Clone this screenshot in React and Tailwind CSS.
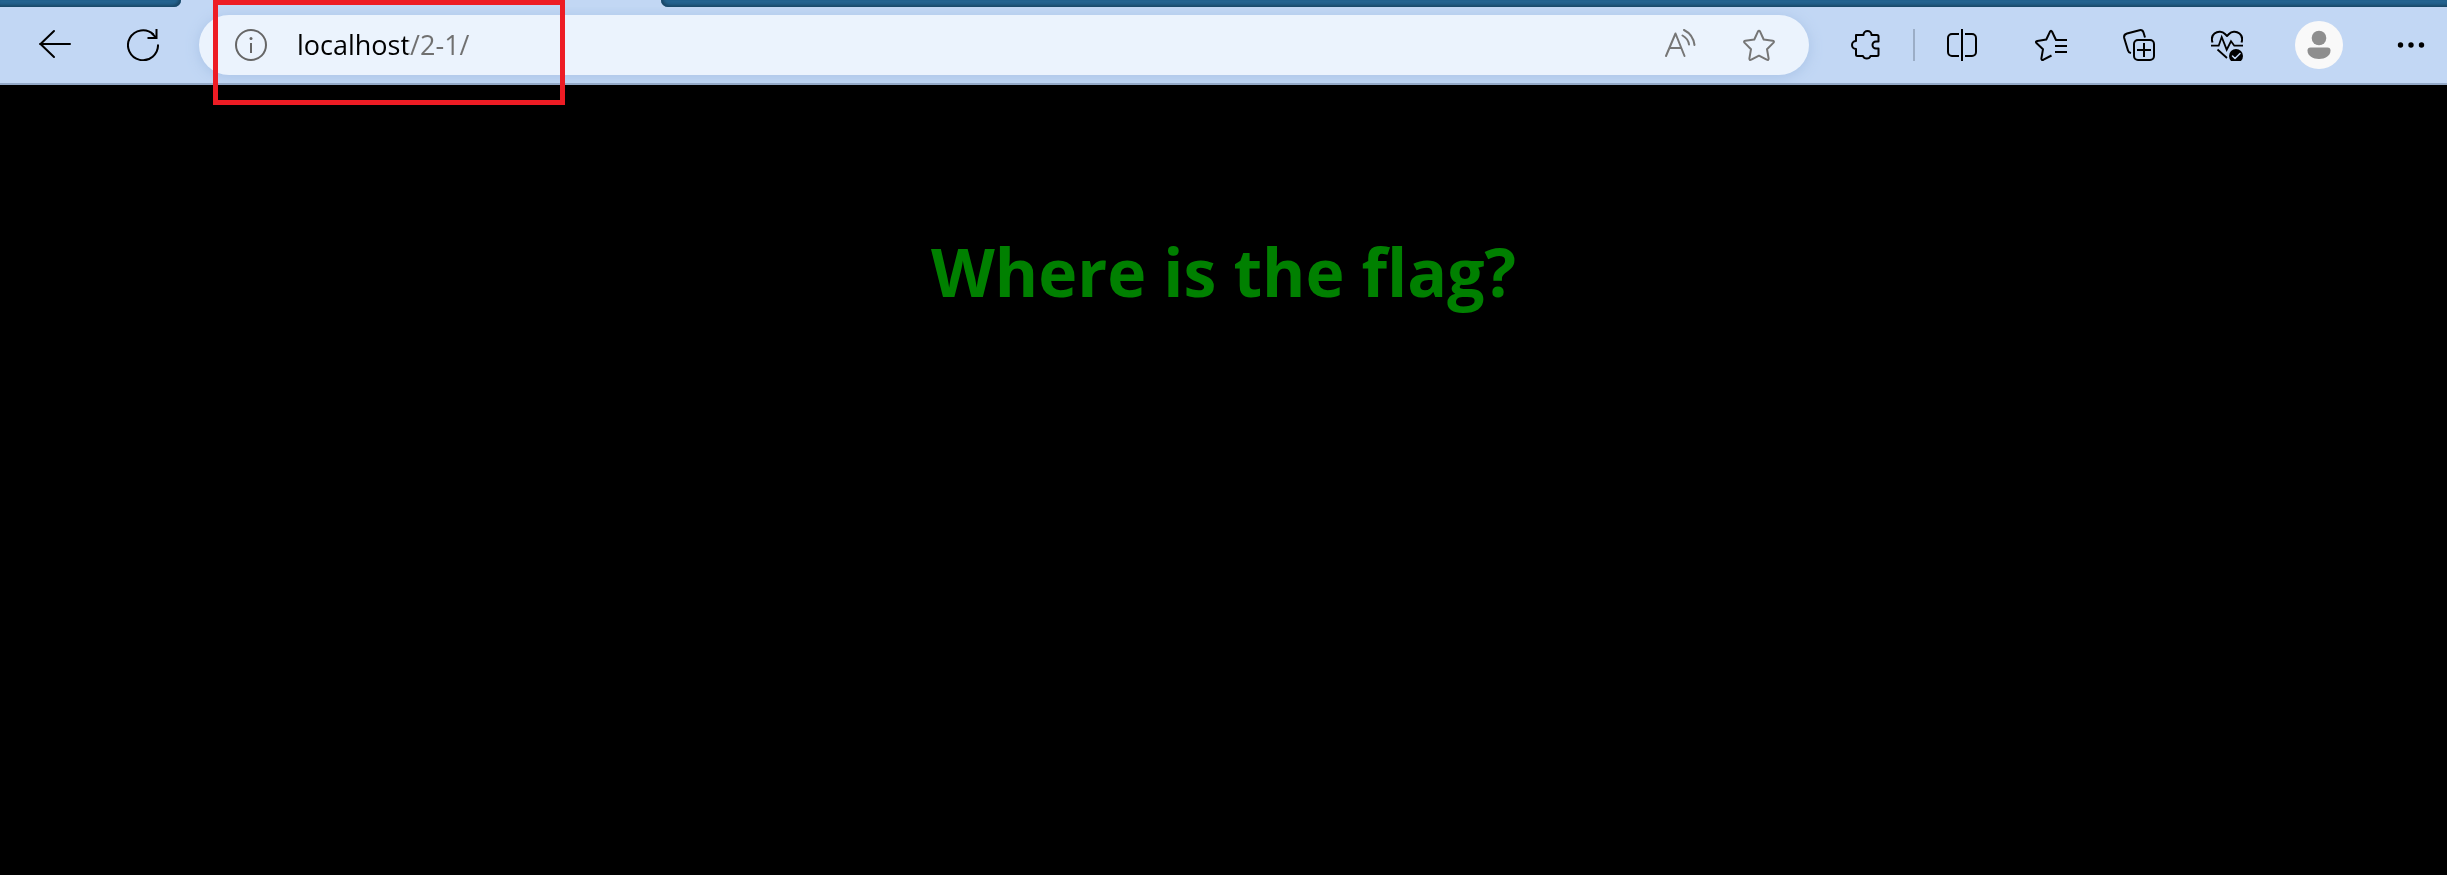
import React from "react";

function Icon({ children, className = "" }) {
  return (
    <svg
      viewBox="0 0 32 32"
      fill="none"
      stroke="currentColor"
      strokeWidth="2"
      strokeLinecap="round"
      strokeLinejoin="round"
      aria-hidden="true"
      className={`size-8 shrink-0 ${className}`}
    >
      {children}
    </svg>
  );
}

function ToolButton({ label, children, className = "w-[88px]" }) {
  return (
    <button
      type="button"
      aria-label={label}
      className={`flex h-full shrink-0 items-center justify-center text-black ${className}`}
    >
      {children}
    </button>
  );
}

function TabStrip() {
  return (
    <div className="flex h-[7px] bg-[#c2d7f4]">
      <div className="w-[181px] shrink-0 rounded-br-[7px] bg-[#24638f] shadow-[inset_-2px_-2px_3px_#194767]" />
      <div className="w-[480px] shrink-0" />
      <div className="grow rounded-bl-[7px] bg-[#24638f] shadow-[inset_2px_-2px_3px_#194767]" />
    </div>
  );
}

function AddressBar() {
  return (
    <form
      onSubmit={(e) => e.preventDefault()}
      className="ml-3 mr-3.5 flex h-[60px] min-w-0 grow items-center rounded-full bg-[#ebf3fd] pl-9 pr-[34px] shadow-[0_2px_14px_#a9c3e6]"
    >
      <button type="button" aria-label="Site information" className="text-[#666]">
        <Icon>
          <circle cx="16" cy="16" r="15" />
          <path d="M16 14v10" strokeLinecap="butt" />
          <circle cx="16" cy="9.5" r="1.5" fill="currentColor" stroke="none" />
        </Icon>
      </button>
      <input
        type="text"
        aria-label="Address"
        defaultValue="localhost/2-1/"
        spellCheck={false}
        className="ml-[30px] mr-8 h-10 min-w-0 grow bg-linear-to-r from-black from-[111px] to-[#707070] to-[111px] bg-clip-text font-['Open_Sans',sans-serif] text-[27px] leading-10 text-transparent caret-black outline-none"
      />
      <button type="button" aria-label="Read aloud" className="mr-[46px] text-[#767676]">
        <Icon>
          <path d="M1 27 10.500 4.500 19.500 27M4.500 19h11.500" />
          <path d="M17.500 6.500c3.500 2 6 5 6.500 9M19 1C25 4 28.500 8.500 29.500 16" />
        </Icon>
      </button>
      <button type="button" aria-label="Add to favorites" className="text-[#767676]">
        <Icon>
          <path d="M14.900 2.600Q16 .8 17.100 2.600L20.700 10.500 29.700 11.700Q31.800 12.300 30.300 13.900L24 20.200 25.600 29.400Q25.700 31.600 23.700 30.700L16 26.700 8.300 30.700Q6.300 31.600 6.400 29.400L8 20.200 1.700 13.900Q.2 12.300 2.300 11.700L11.300 10.500Z" />
        </Icon>
      </button>
    </form>
  );
}

function Toolbar() {
  return (
    <div className="flex h-[78px] items-center overflow-hidden border-b-2 border-[#94a9c7] bg-[#c2d7f4] pl-[11px]">
      <ToolButton label="Back">
        <Icon>
          <path d="M31 15H1M15 2 1.500 15 15 28" />
        </Icon>
      </ToolButton>
      <ToolButton label="Refresh">
        <Icon>
          <path d="M31 15.500A15 15 0 1 1 26.500 5.500" strokeLinecap="butt" />
          <path d="M29.500 0v9H20.500" strokeLinecap="butt" strokeLinejoin="miter" />
          <path d="M25.500 5 29 8.500" />
        </Icon>
      </ToolButton>
      <AddressBar />
      <ToolButton label="Extensions">
        <Icon>
          <path d="M5 6h7.500a4 4 0 0 1 8 0H26a1.500 1.500 0 0 1 1.500 1.500V12.500h-2.500a3.500 3.500 0 0 0 0 7h2.500V25.500A1.500 1.500 0 0 1 26 27H19.500a4 4 0 0 1-7.500 0H6.500A1.500 1.500 0 0 1 5 25.500V20a4 4 0 0 1 0-8Z" />
        </Icon>
      </ToolButton>
      <div className="ml-0.5 mr-1 h-8 w-0.5 shrink-0 bg-[#9badc6]" />
      <ToolButton label="Split screen">
        <Icon>
          <path d="M12 5H5a4 4 0 0 0-4 4v14a4 4 0 0 0 4 4h7M18 5h7a4 4 0 0 1 4 4v14a4 4 0 0 1-4 4h-7M15 0v32" strokeLinecap="butt" />
        </Icon>
      </ToolButton>
      <ToolButton label="Favorites">
        <Icon>
          <path d="M16.500 26.500 8.500 30.700Q6.300 31.600 6.400 29.400L8 20.200 1.400 14Q.2 12.500 2.300 12L11.300 10.500 14.900 2.800Q16 .8 17.100 2.800L21 11H32M20 17h12M20 23h12" strokeLinecap="butt" />
        </Icon>
      </ToolButton>
      <ToolButton label="Collections">
        <Icon>
          <rect x="11" y="11" width="20" height="20" rx="4" />
          <path d="M21 14v14M14 21h14" strokeLinecap="butt" />
          <path d="M22 8.500 20.500 3.500Q19.500 .5 16.500 1.200L4 4.500Q.5 5.500 1.200 9L5 21.500Q5.500 23.500 8 24" strokeLinecap="butt" />
        </Icon>
      </ToolButton>
      <ToolButton label="Browser essentials">
        <Icon strokeLinecap="butt">
          <path d="M1.500 13.500C.3 10 1 6.500 3.500 4.500 7 1.800 11.500 2.500 14 5l2 2 2-2c2.500-2.500 7-3.200 10.500-.5 2.500 2 3.200 5.500 2 9" strokeLinecap="butt" />
          <path d="M0 16.700h7.700L10.700 8l5 12.700L20 12.300l3.300 4.400H32M6.500 20.500l9.500 8.500" strokeLinecap="butt" strokeLinejoin="miter" strokeWidth="1.800" />
          <circle cx="25" cy="27" r="7" fill="currentColor" stroke="none" />
          <path d="m21.500 27 2.500 2.500 5-5" stroke="#c2d7f4" strokeWidth="1.500" />
        </Icon>
      </ToolButton>
      <ToolButton label="Profile" className="w-24">
        <svg viewBox="0 0 48 48" aria-hidden="true" className="size-12">
          <circle cx="24" cy="24" r="24" fill="#f9f9f9" />
          <circle cx="24" cy="17" r="7.300" fill="#8e8e8e" />
          <path d="M15.500 26.500h17a3 3 0 0 1 3 3C35.500 35 30 38 24 38S12.500 35 12.500 29.500a3 3 0 0 1 3-3Z" fill="#8e8e8e" />
        </svg>
      </ToolButton>
      <ToolButton label="Settings and more" className="w-20 pl-2">
        <Icon>
          <g fill="currentColor" stroke="none">
            <circle cx="5.500" cy="16" r="2.700" />
            <circle cx="16" cy="16" r="2.700" />
            <circle cx="26.500" cy="16" r="2.700" />
          </g>
        </Icon>
      </ToolButton>
    </div>
  );
}

export default function App() {
  return (
    <div className="relative flex min-h-screen flex-col bg-black">
      <header>
        <TabStrip />
        <Toolbar />
      </header>
      <main className="grow pt-[140px] text-center">
        <h1 className="font-['Open_Sans',sans-serif] text-[66px] font-bold leading-[92px] text-[#008000]">
          Where is the flag?
        </h1>
      </main>
      <div className="pointer-events-none absolute left-[213px] top-0 h-[105px] w-[352px] border-[5px] border-[#ed1c24]" />
    </div>
  );
}
